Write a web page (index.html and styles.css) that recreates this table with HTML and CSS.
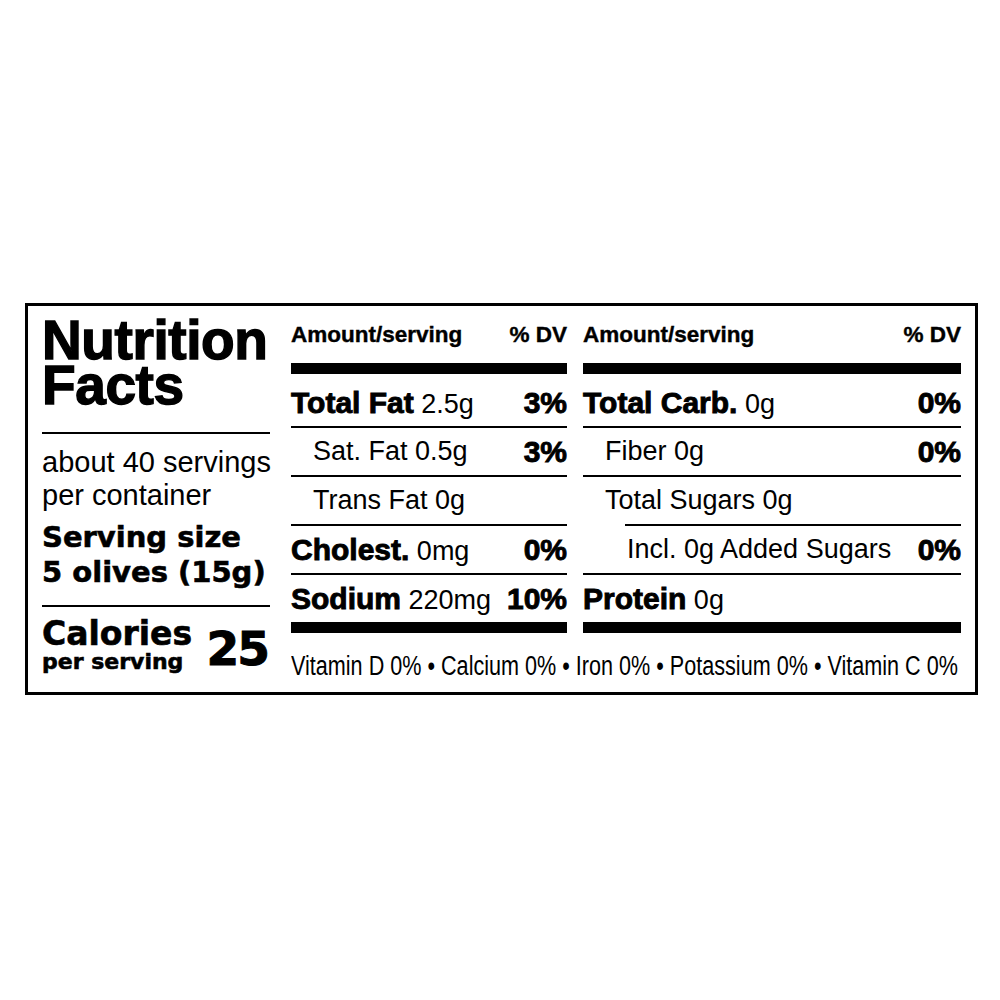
FILE: index.html
```html
<!DOCTYPE html>
<html lang="en">
<head>
<meta charset="utf-8">
<title>Nutrition Facts</title>
<link rel="stylesheet" href="styles.css">
</head>
<body>
<div class="label">
  <div class="left">
    <h1 class="title"><span class="tline">Nutrition</span><span class="tline">Facts</span></h1>
    <div class="rule-thin first"></div>
    <p class="servings">about 40 servings<br>per container</p>
    <p class="serving">Serving size<br>5 olives (15g)</p>
    <div class="rule-thin second"></div>
    <div class="cal">
      <div class="cal-l">
        <div class="cal-big">Calories</div>
        <div class="cal-small">per serving</div>
      </div>
      <div class="cal-n">25</div>
    </div>
  </div>
  <div class="right">
    <div class="cols">
      <div class="col">
        <div class="hdr"><span>Amount/serving</span><span>% DV</span></div>
        <div class="bar"></div>
        <div class="row first"><span><b>Total Fat</b> 2.5g</span><b>3%</b></div>
        <div class="row sub"><span>Sat. Fat 0.5g</span><b>3%</b></div>
        <div class="row sub"><span>Trans Fat 0g</span></div>
        <div class="row"><span><b>Cholest.</b> 0mg</span><b>0%</b></div>
        <div class="row end"><span><b>Sodium</b> 220mg</span><b>10%</b></div>
        <div class="bar"></div>
      </div>
      <div class="col">
        <div class="hdr"><span>Amount/serving</span><span>% DV</span></div>
        <div class="bar"></div>
        <div class="row first"><span><b>Total Carb.</b> 0g</span><b>0%</b></div>
        <div class="row sub"><span>Fiber 0g</span><b>0%</b></div>
        <div class="row sub end"><span>Total Sugars 0g</span></div>
        <div class="rule-ind"></div>
        <div class="row sub2"><span>Incl. 0g Added Sugars</span><b>0%</b></div>
        <div class="row end"><span><b>Protein</b> 0g</span></div>
        <div class="bar"></div>
      </div>
    </div>
    <p class="vit"><span>Vitamin D 0% • Calcium 0% • Iron 0% • Potassium 0% • Vitamin C 0%</span></p>
  </div>
</div>
</body>
</html>
```

FILE: styles.css
```css
* {
  box-sizing: border-box;
  margin: 0;
  padding: 0;
}

body {
  margin: 0;
  background: #fff;
  color: #000;
  font-family: "Liberation Sans", Arial, sans-serif;
}

.label {
  margin: 303px 0 0 25px;
  width: 953px;
  height: 392px;
  border: 3px solid #000;
  display: flex;
  gap: 21px;
  padding: 0 14px;
}

/* left column */
.left {
  width: 228px;
  flex: none;
  display: flex;
  flex-direction: column;
}

.title {
  font-weight: 700;
  font-size: 55px;
  line-height: 45px;
  margin-top: 12px;
  letter-spacing: -0.4px;
  -webkit-text-stroke: 1.4px #000;
}

.tline {
  display: block;
  height: 45px;
}

.rule-thin {
  height: 2px;
  background: #000;
}

.rule-thin.first {
  margin-top: 24px;
}

.rule-thin.second {
  margin-top: 15px;
}

.servings {
  font-size: 29px;
  line-height: 33px;
  margin-top: 12px;
  white-space: nowrap;
}

.serving {
  font-family: "DejaVu Sans", sans-serif;
  font-weight: 700;
  font-size: 29px;
  line-height: 35px;
  margin-top: 8px;
  white-space: nowrap;
  -webkit-text-stroke: 0.6px #000;
}

.cal {
  display: flex;
  justify-content: space-between;
  align-items: flex-end;
  margin-top: 10px;
  font-family: "DejaVu Sans", sans-serif;
  font-weight: 700;
  -webkit-text-stroke: 0.6px #000;
}

.cal-big {
  font-size: 33px;
  line-height: 33px;
}

.cal-small {
  font-size: 22px;
  line-height: 24px;
}

.cal-n {
  font-size: 47px;
  line-height: 40px;
  padding-bottom: 5px;
  letter-spacing: -2px;
  margin-right: 2px;
  -webkit-text-stroke: 1px #000;
}

/* right area */
.right {
  flex: 1;
  min-width: 0;
  display: flex;
  flex-direction: column;
}

.cols {
  display: grid;
  grid-template-columns: 276px 378px;
  gap: 16px;
}

.hdr {
  display: flex;
  justify-content: space-between;
  font-weight: 700;
  font-size: 22.5px;
  height: 57px;
  line-height: 57px;
  -webkit-text-stroke: 0.4px #000;
}

.bar {
  height: 11px;
  background: #000;
}

.row {
  display: flex;
  justify-content: space-between;
  height: 49px;
  line-height: 47px;
  border-bottom: 2px solid #000;
  font-size: 27px;
  white-space: nowrap;
}

.row.first {
  height: 54px;
  padding-top: 5px;
}

.row.end {
  height: 47px;
  border-bottom: none;
}

.row b {
  font-weight: 700;
  font-size: 30px;
  -webkit-text-stroke: 0.9px #000;
}

.row.sub {
  padding-left: 22px;
}

.row.sub2 {
  padding-left: 44px;
}

.rule-ind {
  height: 2px;
  margin-left: 42px;
  background: #000;
}

.vit {
  font-size: 27px;
  line-height: 30px;
  padding-top: 18px;
  white-space: nowrap;
  overflow: hidden;
}

.vit span {
  display: inline-block;
  transform: scaleX(0.8);
  transform-origin: left center;
}
```
